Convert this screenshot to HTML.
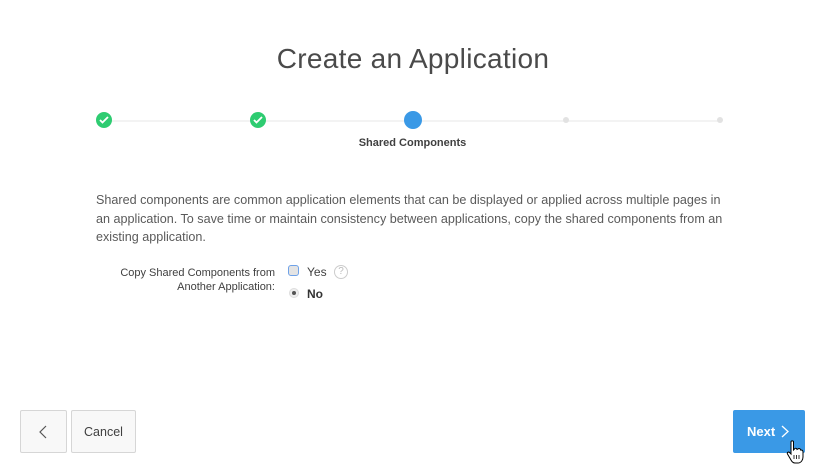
<!DOCTYPE html>
<html><head><meta charset="utf-8"><style>
html,body{margin:0;padding:0;background:#fff;width:826px;height:473px;overflow:hidden;font-family:"Liberation Sans",sans-serif;color:#404040;position:relative}
.abs{position:absolute}
h1{position:absolute;top:43px;left:0;width:826px;text-align:center;margin:0;font-weight:normal;font-size:28px;color:#4a4a4a;letter-spacing:0.3px}
.line{top:120px;left:104px;width:616px;height:2px;background:#f3f3f3}
.chk{width:16px;height:16px;border-radius:50%;background:#2ecc71;top:112px}
.chk svg{position:absolute;left:3px;top:4px}
.dot{width:6px;height:6px;border-radius:50%;background:#e2e2e2;top:117px}
p{position:absolute;left:96px;top:191px;width:640px;margin:0;font-size:12.6px;line-height:18.5px;color:#5a5a5a}
.btn{border:1px solid #d6d6d6;background:#f8f8f8;border-radius:2px;box-sizing:border-box}
</style></head><body>
<h1>Create an Application</h1>
<div class="abs line"></div>
<div class="abs chk" style="left:96px"><svg width="10" height="8" viewBox="0 0 10 8"><path d="M1 4l2.5 2.5L9 1" stroke="#fff" stroke-width="1.8" fill="none"/></svg></div>
<div class="abs chk" style="left:250px"><svg width="10" height="8" viewBox="0 0 10 8"><path d="M1 4l2.5 2.5L9 1" stroke="#fff" stroke-width="1.8" fill="none"/></svg></div>
<div class="abs" style="left:404px;top:111px;width:18px;height:18px;border-radius:50%;background:#3a99e6"></div>
<div class="abs dot" style="left:563px"></div>
<div class="abs dot" style="left:717px"></div>
<div class="abs" style="left:330px;top:137px;width:165px;text-align:center;font-size:11px;font-weight:bold;color:#404040">Shared Components</div>
<p>Shared components are common application elements that can be displayed or applied across multiple pages in an application. To save time or maintain consistency between applications, copy the shared components from an existing application.</p>
<div class="abs" style="left:100px;top:266px;width:175px;text-align:right;font-size:11px;line-height:14px;color:#404040">Copy Shared Components from Another Application:</div>
<div class="abs" style="left:288px;top:265px;width:11px;height:11px;border:1px solid #6fa2e8;border-radius:3px;background:#e4e4e4;box-sizing:border-box"></div>
<div class="abs" style="left:307px;top:265px;font-size:12px">Yes</div>
<div class="abs" style="left:334px;top:265px;width:14px;height:14px;border:1px solid #ccc;border-radius:50%;box-sizing:border-box;font-size:10px;color:#bbb;text-align:center;line-height:12px">?</div>
<div class="abs" style="left:289px;top:288px;width:10px;height:10px;border-radius:50%;background:#eee;border:1px solid #ddd;box-sizing:border-box"></div>
<div class="abs" style="left:292px;top:291px;width:4px;height:4px;border-radius:50%;background:#555"></div>
<div class="abs" style="left:307px;top:287px;font-size:12px;font-weight:bold;color:#333">No</div>
<div class="abs btn" style="left:20px;top:410px;width:47px;height:43px"><svg style="position:absolute;left:18px;top:14px" width="8" height="14" viewBox="0 0 8 14"><path d="M7 1L1 7l6 6" stroke="#555" stroke-width="1.2" fill="none"/></svg></div>
<div class="abs btn" style="left:71px;top:410px;width:65px;height:43px;font-size:12.5px;color:#404040;text-align:center;line-height:43px">Cancel</div>
<div class="abs" style="left:733px;top:410px;width:72px;height:43px;background:#3a99e6;border-radius:2px;color:#fff;font-weight:bold;font-size:13px;line-height:43px"><span style="position:absolute;left:14px">Next</span><svg style="position:absolute;left:48px;top:15px" width="8" height="13" viewBox="0 0 8 13"><path d="M1 1l6 5.5L1 12" stroke="#fff" stroke-width="1.3" fill="none"/></svg></div>
<svg class="abs" style="left:786px;top:440px" width="18" height="24" viewBox="0 0 18 24"><path d="M5 2c0-1.5 2.5-1.5 2.5 0v8l1-1c.5-1 2.5-1 2.5.5l1-.5c.5-1 2.5-.5 2.5 1l.5 0c1 0 2 .5 2 2v5c0 3-2 6-5 6H9c-2 0-3-1-4-3L1.5 14c-.8-1.5 1-2.5 2-1.5L5 14z" fill="#fff" stroke="#000" stroke-width="1"/><path d="M8 15v4M10.5 15v4M13 15v4" stroke="#000" stroke-width=".8"/></svg>
</body></html>
